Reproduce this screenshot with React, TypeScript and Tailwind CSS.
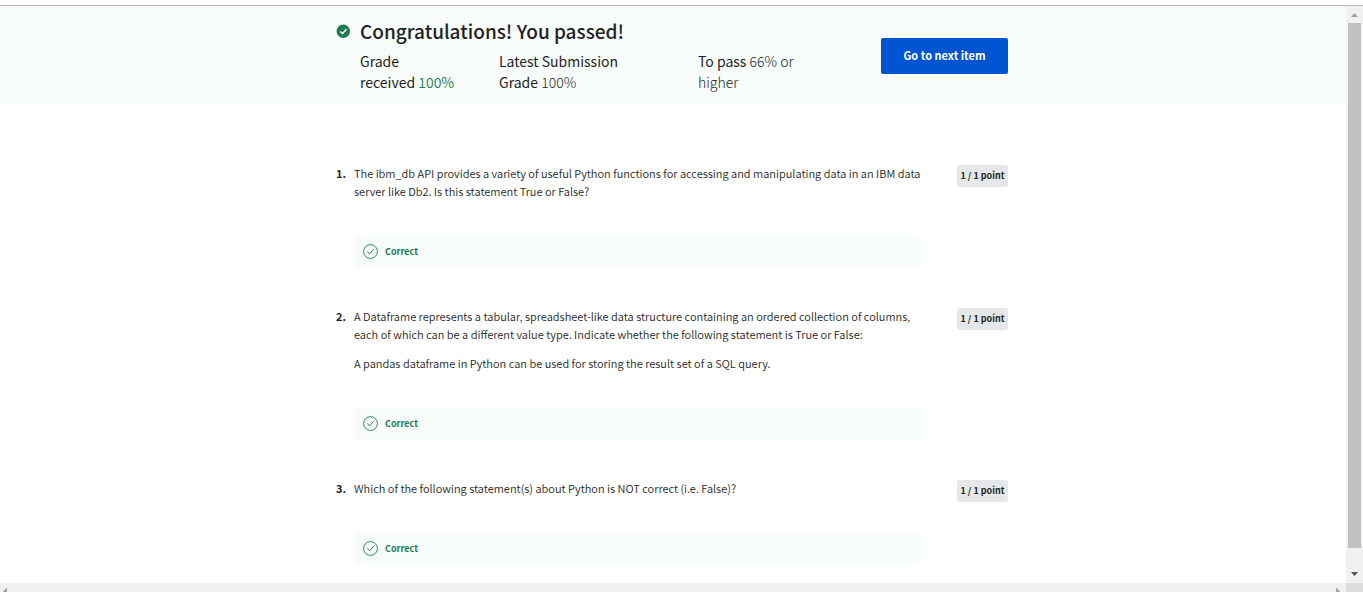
import type { ReactNode } from "react";

type Question = { body: string[] };

const questions: Question[] = [
  {
    body: [
      "The ibm_db API provides a variety of useful Python functions for accessing and manipulating data in an IBM data server like Db2. Is this statement True or False?",
    ],
  },
  {
    body: [
      "A Dataframe represents a tabular, spreadsheet-like data structure containing an ordered collection of columns, each of which can be a different value type. Indicate whether the following statement is True or False:",
      "A pandas dataframe in Python can be used for storing the result set of a SQL query.",
    ],
  },
  { body: ["Which of the following statement(s) about Python is NOT correct (i.e. False)?"] },
];

function SolidCheck() {
  return (
    <svg className="size-[14px] shrink-0" viewBox="0 0 14 14" aria-hidden="true">
      <circle cx="7.300" cy="7.300" r="6.700" fill="#1d7c50" />
      <path d="M4.200 7.500 6.500 9.500 10.500 5.200" fill="none" stroke="#fff" strokeWidth="1.500" />
    </svg>
  );
}

function OutlineCheck() {
  return (
    <svg className="size-[15px] shrink-0" viewBox="0 0 15 15" fill="none" stroke="#1d7c50" aria-hidden="true">
      <circle cx="7.500" cy="7.500" r="6.900" strokeWidth="0.900" />
      <path d="M4.300 7.600 6.600 9.800 10.700 5.200" strokeWidth="1" />
    </svg>
  );
}

function Stat({ className, children }: { className: string; children: ReactNode }) {
  return <p className={`text-sm leading-[21px] ${className}`}>{children}</p>;
}

function QuestionItem({ number, body }: { number: number; body: string[] }) {
  return (
    <li className="flex items-start">
      <span className="w-[18px] shrink-0 text-[11px] leading-[18px] font-bold">{number}.</span>
      <div className="min-w-0 flex-1">
        <div className="flex flex-col gap-[11px] text-[11px] leading-[18px] font-[350]">
          {body.map((text) => (
            <p key={text}>{text}</p>
          ))}
        </div>
        <div className="mt-[35px] flex h-[33px] items-center gap-[7px] bg-[#f7fbfa] px-[9px] text-[#1d7c50]">
          <OutlineCheck />
          <span className="text-[9px] font-bold">Correct</span>
        </div>
      </div>
      <div className="flex w-[87px] shrink-0 justify-end pt-px">
        <span className="min-w-[51px] rounded-[3px] bg-[#e5e7e8] px-[3px] text-center text-[9px] leading-[22px] font-bold whitespace-nowrap">
          1 / 1 point
        </span>
      </div>
    </li>
  );
}

export default function App() {
  return (
    <div
      lang="en"
      className="flex h-screen flex-col overflow-hidden bg-white pt-[5px] font-['Noto_Sans_CJK_SC','Noto_Sans',sans-serif] text-[#1f1f1f]"
    >
      <div className="flex min-h-0 flex-1 border-t border-[#b9b9b9]">
        <main className="min-w-0 flex-1 overflow-hidden">
          <header className="bg-[#f7fbfa]">
            <div className="mx-auto flex h-[99px] max-w-[674px] items-start pr-[2px]">
              <div className="flex w-6 shrink-0 pt-[18px]">
                <SolidCheck />
              </div>
              <div className="min-w-0 flex-1 pt-[11px]">
                <h1 className="text-[19px] leading-[28px] font-medium">Congratulations! You passed!</h1>
                <div className="mt-[6px] flex">
                  <Stat className="w-[139px] pr-[43px]">
                    Grade received <span className="font-[350] text-[#1d7c50]">100%</span>
                  </Stat>
                  <Stat className="w-[199px] pr-16">
                    Latest Submission Grade <span className="font-light">100%</span>
                  </Stat>
                  <Stat className="w-[110px]">
                    To pass <span className="font-light">66% or higher</span>
                  </Stat>
                </div>
              </div>
              <button
                type="button"
                className="mt-8 h-9 w-[127px] shrink-0 rounded-[2px] bg-[#0056d2] pb-[2px] text-[11px] font-bold text-white"
              >
                Go to next item
              </button>
            </div>
          </header>
          <ol className="mx-auto flex max-w-[674px] flex-col gap-[39px] pt-[59px] pr-[2px]">
            {questions.map((question, index) => (
              <QuestionItem key={index} number={index + 1} body={question.body} />
            ))}
          </ol>
        </main>
        <div className="flex w-[17px] shrink-0 flex-col items-center bg-[#f1f1f1]" aria-hidden="true">
          <svg className="h-[17px] w-[17px] shrink-0" viewBox="0 0 17 17">
            <path d="M5 11h7L8.500 7z" fill="#a3a3a3" />
          </svg>
          <div className="w-[13px] flex-1 bg-[#c1c1c1]" />
          <svg className="h-[35px] w-[17px] shrink-0" viewBox="0 0 17 35">
            <path d="M5 24h7l-3.500 4z" fill="#505050" />
          </svg>
        </div>
      </div>
      <div className="flex h-[9px] shrink-0 bg-[#f1f1f1]" aria-hidden="true">
        <svg className="h-[9px] w-[17px]" viewBox="0 0 17 9">
          <path d="M7 4.500v4.500H2.500z" fill="#a3a3a3" />
        </svg>
        <div className="flex-1" />
        <svg className="h-[9px] w-[17px]" viewBox="0 0 17 9">
          <path d="M7 4.500v4.500h4.500z" fill="#a3a3a3" />
        </svg>
        <div className="w-[17px] bg-[#dcdcdc]" />
      </div>
    </div>
  );
}
